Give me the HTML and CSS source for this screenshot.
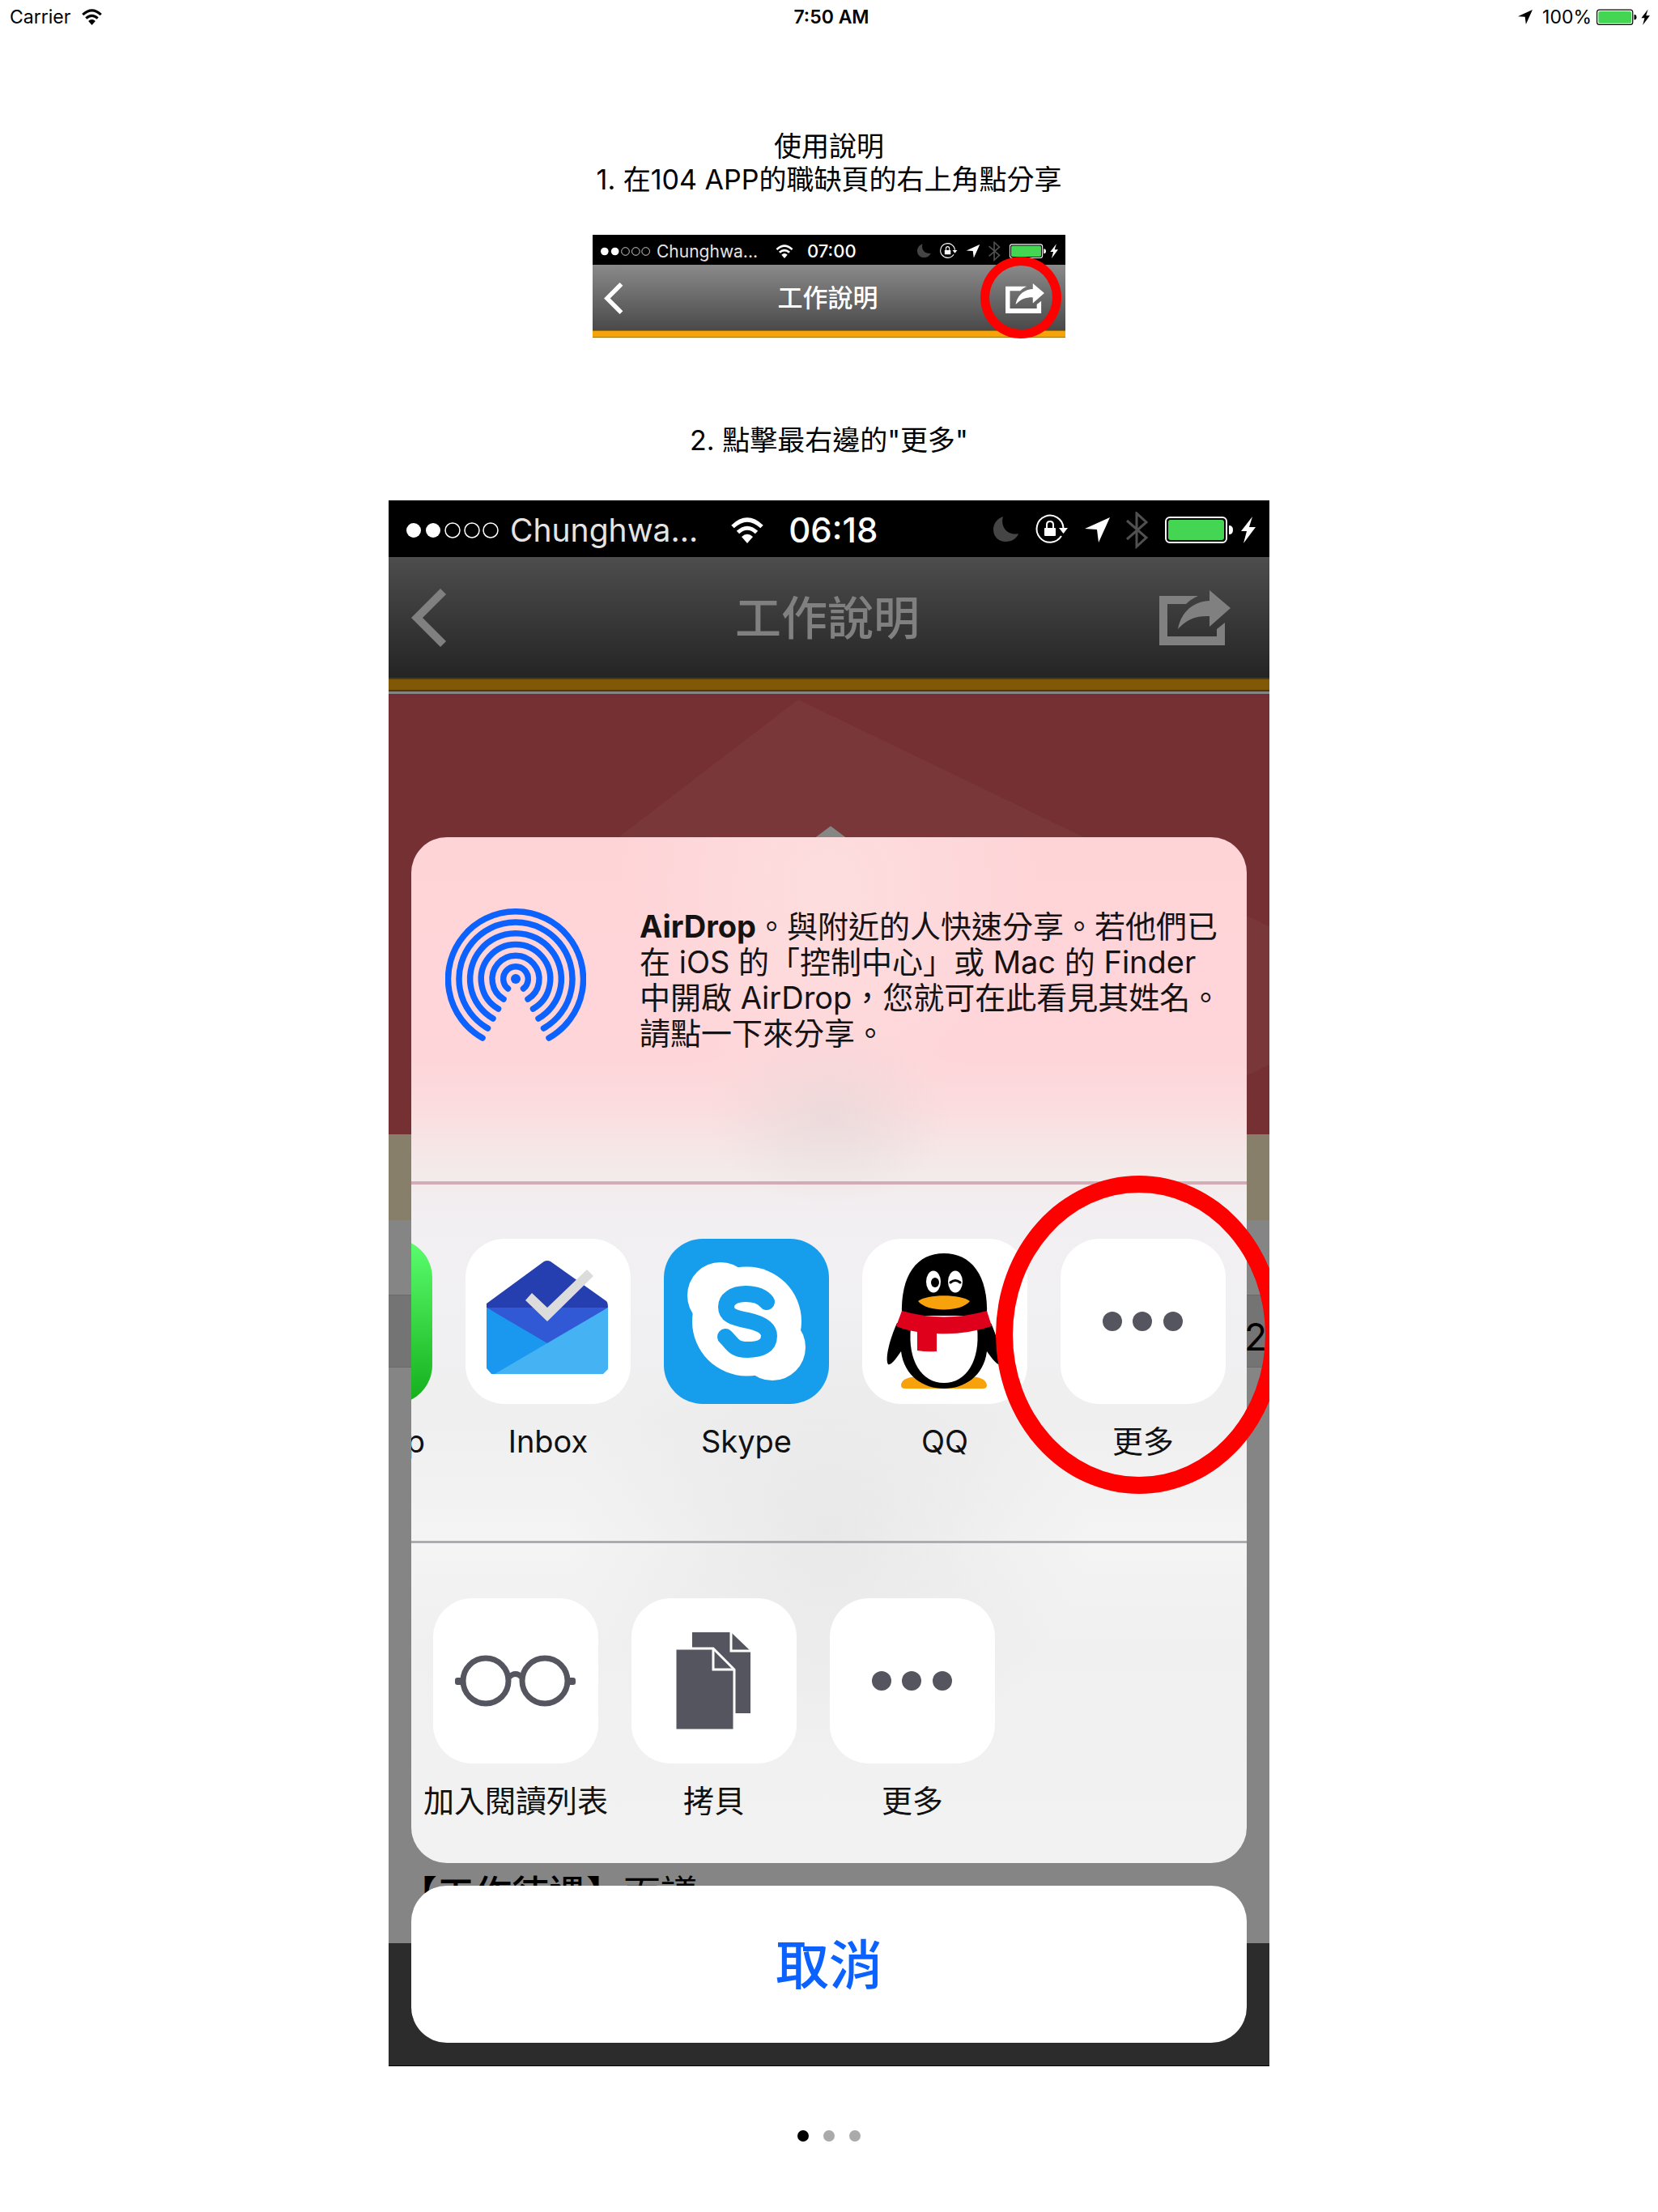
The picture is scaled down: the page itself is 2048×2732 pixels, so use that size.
FILE: index.html
```html
<!DOCTYPE html>
<html lang="zh-Hant">
<head>
<meta charset="utf-8">
<meta name="viewport" content="width=device-width, initial-scale=1">
<title>使用說明</title>
<link rel="stylesheet" href="styles.css">
</head>
<body>
<svg class="defs" aria-hidden="true">
  <symbol id="wifi" viewBox="0 0 40 32">
    <g fill="none" stroke="currentColor" stroke-width="5">
      <path d="M2 11.500Q20 -5.500 38 11.500"/>
      <path d="M8.500 18.500Q20 8 31.500 18.500"/>
    </g>
    <path d="M13 24Q20 17.500 27 24L20 32Z" fill="currentColor"/>
  </symbol>
  <symbol id="arrow" viewBox="0 0 31 31">
    <path d="M0 14L31 0L17 31L15 15Z" fill="currentColor"/>
  </symbol>
  <symbol id="battery" viewBox="0 0 112 34">
    <rect x="1" y="2" width="75" height="31" rx="5" fill="none" stroke="currentColor" stroke-width="2"/>
    <rect x="4" y="5" width="69" height="25" rx="3" fill="#44d652"/>
    <path d="M79 12Q84 12 84 17.500Q84 23 79 23Z" fill="currentColor"/>
    <path d="M108 1L94 19H101L97 34L112 14H104Z" fill="currentColor"/>
  </symbol>
  <symbol id="signal" viewBox="0 0 114 20">
    <circle cx="9" cy="10" r="9" fill="currentColor"/>
    <circle cx="33" cy="10" r="9" fill="currentColor"/>
    <g fill="none" stroke="currentColor" stroke-width="1.500">
      <circle cx="57" cy="10" r="9"/><circle cx="81" cy="10" r="9"/><circle cx="104" cy="10" r="9"/>
    </g>
  </symbol>
  <symbol id="status-set" viewBox="0 0 324 46">
    <path d="M12 6C4 9 0 15 0 22C0 31 7 37 15 37C23 37 29 33 31 27C19 30 8 20 12 6Z" fill="#454545"/>
    <path d="M84 30A16.500 16.500 0 1 1 86.500 20" fill="none" stroke="currentColor" stroke-width="2"/>
    <path d="M81 20H92L86.500 27Z" fill="currentColor"/>
    <rect x="63" y="20" width="14" height="10" rx="1" fill="currentColor"/>
    <path d="M66 21V16Q66 12 70 12Q74 12 74 16V21" fill="none" stroke="currentColor" stroke-width="2"/>
    <use href="#arrow" x="113" y="7" width="31" height="31"/>
    <path d="M165 11L189 32L177 43V2L189 13L165 34" fill="none" stroke="#505050" stroke-width="3"/>
    <use href="#battery" x="212" y="5" width="112" height="34"/>
  </symbol>
  <symbol id="back" viewBox="0 0 44 72">
    <path d="M0 36L36 0L43 7L14 36L43 65L36 72Z" fill="currentColor"/>
  </symbol>
  <symbol id="share" viewBox="0 0 88 68">
    <path d="M0 7H48Q39 11 33 17H10V57H71V48L81 40V68H0Z" fill="currentColor"/>
    <path d="M62 0L88 22L62 45V32C44 31 33 37 23 48C27 26 42 14 62 13Z" fill="currentColor"/>
  </symbol>
  <symbol id="dots" viewBox="0 0 204 204">
    <g fill="#55555f"><circle cx="64" cy="102" r="12"/><circle cx="101" cy="102" r="12"/><circle cx="139" cy="102" r="12"/></g>
  </symbol>
</svg>

<header class="device-status">
  <div class="device-left">Carrier<svg class="device-wifi"><use href="#wifi"/></svg></div>
  <div class="device-time">7:50 AM</div>
  <div class="device-right">
    <svg class="device-arrow"><use href="#arrow"/></svg>
    <span>100%</span>
    <svg class="device-battery"><use href="#battery"/></svg>
  </div>
</header>

<main class="guide">
  <h1 class="step">使用說明</h1>
  <p class="step">1. 在104 APP的職缺頁的右上角點分享</p>

  <section class="shot shot-small">
    <div class="bar">
      <svg class="signal"><use href="#signal"/></svg>
      <span class="carrier">Chunghwa...</span>
      <svg class="wifi"><use href="#wifi"/></svg>
      <strong class="clock">07:00</strong>
      <svg class="status-set"><use href="#status-set"/></svg>
    </div>
    <div class="nav">
      <button class="nav-button" aria-label="返回"><svg class="back"><use href="#back"/></svg></button>
      <h2 class="nav-title">工作說明</h2>
      <button class="nav-button" aria-label="分享"><svg class="share"><use href="#share"/></svg></button>
    </div>
    <span class="ring"></span>
  </section>

  <p class="step step-two">2. 點擊最右邊的"更多"</p>

  <section class="shot shot-large">
    <div class="bar">
      <svg class="signal"><use href="#signal"/></svg>
      <span class="carrier">Chunghwa...</span>
      <svg class="wifi"><use href="#wifi"/></svg>
      <strong class="clock">06:18</strong>
      <svg class="status-set"><use href="#status-set"/></svg>
    </div>
    <div class="nav">
      <button class="nav-button" aria-label="返回"><svg class="back"><use href="#back"/></svg></button>
      <h2 class="nav-title">工作說明</h2>
      <button class="nav-button" aria-label="分享"><svg class="share"><use href="#share"/></svg></button>
    </div>
    <div class="stage">
      <div class="backdrop">
        <div class="hero">
          <svg class="hero-art" viewBox="0 0 1088 543" preserveAspectRatio="none">
            <path d="M506 7L1088 287V457L1000 500L285 176Z" fill="#7a373a"/>
            <path d="M546 163L574 184H518Z" fill="#858784"/>
          </svg>
        </div>
        <div class="tan"></div>
        <div class="gap"></div>
        <div class="tab">2</div>
        <div class="details"><p class="detail"><b>【工作待遇】</b>面議</p></div>
        <div class="foot"></div>
      </div>
      <div class="overlay">
        <div class="sheet">
          <div class="airdrop">
            <svg class="airdrop-icon" viewBox="-87 -87 174 168">
              <circle r="6" fill="#0b62ff"/>
              <g fill="none" stroke="#0b62ff" stroke-width="7.500" stroke-linecap="round">
                <path d="M-9.500 12A15.300 15.300 0 1 1 9.500 12"/>
                <path d="M-15 25A29 29 0 1 1 15 25"/>
                <path d="M-21.500 37A42.700 42.700 0 1 1 21.500 37"/>
                <path d="M-28 49A56.400 56.400 0 1 1 28 49"/>
                <path d="M-34.500 61A70 70 0 1 1 34.500 61"/>
                <path d="M-41 73A83.500 83.500 0 1 1 41 73"/>
              </g>
            </svg>
            <p class="airdrop-text"><b>AirDrop</b>。與附近的人快速分享。若他們已<br>在 iOS 的「控制中心」或 Mac 的 Finder<br>中開啟 AirDrop，您就可在此看見其姓名。<br>請點一下來分享。</p>
          </div>
          <div class="row apps">
            <button class="item"><span class="tile tile-green"></span><span class="label">WhatsApp</span></button>
            <button class="item"><svg class="tile" viewBox="0 0 204 204">
              <path d="M26 80L97 28Q101 26 105 28L174 77Q176 79 176 85L101 132L26 85Z" fill="#263fb0"/>
              <path d="M26 85H176L101 133Z" fill="#3159d6"/>
              <path d="M26 85L101 129L120 167H32L26 160Z" fill="#1a98f0"/>
              <path d="M36 167L176 85V161L170 167Z" fill="#45b2f4"/>
              <path d="M74 76L82 67L101 85L150 38L158 46L101 102Z" fill="#dcdcdc"/>
            </svg><span class="label">Inbox</span></button>
            <button class="item"><svg class="tile tile-blue" viewBox="0 0 204 204">
              <g fill="#fff"><circle cx="102.500" cy="102" r="67.500"/><circle cx="70" cy="70" r="41"/><circle cx="134" cy="134" r="41"/></g>
              <path d="M127 78C121 70 112 68 101 68C86 68 77 75 77 84C77 94 84 97 104 101C122 105 130 111 130 120C130 132 120 137 103 137C85 137 84 128 76 121" fill="none" stroke="#169eec" stroke-width="20" stroke-linecap="round"/>
            </svg><span class="label">Skype</span></button>
            <button class="item"><svg class="tile" viewBox="0 0 204 204">
              <path d="M48 181C49 171 62 168 101 170C140 168 153 171 154 181Q154 185 149 185H53Q48 185 48 181Z" fill="#f7a20d"/>
              <path d="M43 104C34 124 28 148 32 155C36 157 44 145 48 139C52 170 76 185 101 185C126 185 150 170 154 139C158 145 167 157 170 155C174 148 168 124 159 104Z"/>
              <path d="M49 95C47 44 68 18 101 18C134 18 156 44 154 95Z"/>
              <path d="M60 110H142C146 150 129 178 101 178C73 178 56 150 60 110Z" fill="#fff"/>
              <path d="M49 89Q101 104 154 89L160 108Q126 119 92 117V139Q80 140 68 138V115Q54 113 42 108Z" fill="#df001b"/>
              <g fill="#fff"><ellipse cx="88" cy="53" rx="9" ry="13.500"/><ellipse cx="115" cy="53" rx="9" ry="13.500"/></g>
              <ellipse cx="90" cy="54" rx="5" ry="6"/>
              <path d="M109 54Q115 49 121 54" fill="none" stroke="#000" stroke-width="3" stroke-linecap="round"/>
              <path d="M69 77C80 68 122 68 133 77C122 91 80 91 69 77Z" fill="#f7a20d"/>
            </svg><span class="label">QQ</span></button>
            <button class="item"><svg class="tile"><use href="#dots"/></svg><span class="label">更多</span></button>
          </div>
          <div class="row actions">
            <button class="item"><svg class="tile" viewBox="0 0 204 204">
              <g fill="none" stroke="#55555f" stroke-width="7"><circle cx="65" cy="102" r="28"/><circle cx="138" cy="102" r="28"/><path d="M93 98Q102 89 110 98"/></g>
              <g fill="#55555f"><rect x="27" y="98" width="11" height="9" rx="3"/><rect x="165" y="98" width="11" height="9" rx="3"/></g>
            </svg><span class="label">加入閱讀列表</span></button>
            <button class="item"><svg class="tile" viewBox="0 0 204 204">
              <path d="M75 42H123L147 65V142H75Z" fill="#55555f"/>
              <path d="M123 40V65H148" fill="none" stroke="#fff" stroke-width="3"/>
              <path d="M54 62H101L127 88V163H54Z" fill="#55555f" stroke="#fff" stroke-width="3"/>
              <path d="M101 62V88H127" fill="none" stroke="#fff" stroke-width="3"/>
            </svg><span class="label">拷貝</span></button>
            <button class="item"><svg class="tile"><use href="#dots"/></svg><span class="label">更多</span></button>
          </div>
        </div>
        <button class="cancel">取消</button>
        <span class="ring ring-more"></span>
      </div>
    </div>
  </section>

  <nav class="pager" aria-label="頁面">
    <button class="page-dot current" aria-label="第 1 頁"></button>
    <button class="page-dot" aria-label="第 2 頁"></button>
    <button class="page-dot" aria-label="第 3 頁"></button>
  </nav>
</main>
</body>
</html>
```

FILE: styles.css
```css
* {
  box-sizing: border-box;
}

body {
  margin: 0;
  min-height: 100vh;
  background: #fff;
  color: #000;
  font-family: Inter, "Noto Sans CJK TC", sans-serif;
}

h1, h2, p {
  margin: 0;
  font-weight: 400;
}

button {
  margin: 0;
  padding: 0;
  border: 0;
  background: none;
  color: inherit;
  font: inherit;
}

svg {
  display: block;
  flex: none;
}

.defs {
  position: absolute;
  width: 0;
  height: 0;
}

/* Device status bar */
.device-status {
  display: grid;
  grid-template-columns: 1fr auto 1fr;
  align-items: center;
  height: 42px;
  padding: 0 10px 0 12px;
  font-size: 23px;
}

.device-left, .device-right {
  display: flex;
  align-items: center;
}

.device-left {
  gap: 14px;
}

.device-right {
  justify-content: flex-end;
  gap: 6px;
}

.device-time {
  padding-left: 4px;
  font-weight: 600;
}

.device-wifi {
  width: 25px;
  height: 20px;
}

.device-arrow {
  width: 18px;
  height: 18px;
  margin-right: 6px;
}

.device-battery {
  width: 66px;
  height: 20px;
}

/* Guide column */
.guide {
  display: flex;
  flex-direction: column;
  align-items: center;
  padding-top: 118px;
}

.step {
  font-size: 34px;
  line-height: 41px;
  text-align: center;
}

.step-two {
  margin: 105px 0 54px;
}

/* Phone shots */
.shot {
  position: relative;
  max-width: 100%;
  overflow: hidden;
}

.bar {
  display: flex;
  align-items: center;
  background: #000;
  color: #fff;
  white-space: nowrap;
}

.carrier {
  color: #e4e4e4;
}

.clock {
  font-weight: 500;
}

.status-set {
  margin-left: auto;
}

.nav {
  display: flex;
  align-items: center;
  justify-content: space-between;
}

.nav-title {
  font-weight: 500;
}

.ring {
  position: absolute;
  border: solid #f00;
  border-radius: 50%;
  pointer-events: none;
}

.shot-small {
  width: 584px;
  margin-top: 48px;
}

.shot-small .bar {
  height: 37px;
  padding: 3px 9px 0 10px;
  font-size: 21px;
}

.shot-small .signal {
  width: 61px;
  height: 11px;
  margin-right: 8px;
}

.shot-small .wifi {
  width: 22px;
  height: 17px;
  margin: 0 17px 0 22px;
}

.shot-small .clock {
  font-size: 22px;
}

.shot-small .status-set {
  width: 174px;
  height: 25px;
}

.shot-small .nav {
  height: 91px;
  padding: 0 26px 0 14px;
  border-bottom: 1px solid #fff;
  background:
    linear-gradient(#a87204 0 1px, #f5a40a 1px 8px, #a87204 8px 9px) bottom / 100% 9px no-repeat,
    linear-gradient(#8a8a8a, #424242);
  color: #fff;
}

.shot-small .nav-title {
  padding: 0 0 14px 33px;
  font-size: 31px;
}

.shot-small .nav-button {
  padding-bottom: 8px;
}

.shot-small .back {
  width: 24px;
  height: 39px;
}

.shot-small .share {
  width: 48px;
  height: 37px;
}

.shot-small .ring {
  right: 5px;
  bottom: 0;
  width: 100px;
  height: 101px;
  border-width: 11px;
}

.shot-large {
  width: 1088px;
}

.shot-large .bar {
  height: 70px;
  padding: 3px 17px 0 22px;
  font-size: 39px;
}

.shot-large .signal {
  width: 114px;
  height: 20px;
  margin-right: 14px;
}

.shot-large .wifi {
  width: 40px;
  height: 32px;
  margin: 0 31px 0 41px;
}

.shot-large .clock {
  font-size: 42px;
}

.shot-large .status-set {
  width: 324px;
  height: 46px;
}

.shot-large .nav {
  height: 169px;
  padding: 0 48px 19px 28px;
  background:
    linear-gradient(#523903 0 2px, #815805 2px 15px, #523903 15px 17px, #858585 17px 20px) bottom / 100% 20px no-repeat,
    linear-gradient(#4d4d4d, #242424 150px);
  color: #808080;
}

.shot-large .nav-title {
  padding: 0 0 8px 60px;
  font-size: 57px;
}

.shot-large .back {
  width: 44px;
  height: 72px;
}

.shot-large .share {
  width: 88px;
  height: 68px;
}

/* Page under the share sheet */
.stage {
  display: grid;
}

.backdrop, .overlay {
  grid-area: 1 / 1;
  min-width: 0;
}

.backdrop {
  display: flex;
  flex-direction: column;
  background: #858585;
}

.hero {
  height: 544px;
  background: #743033;
}

.hero-art {
  width: 100%;
  height: 100%;
}

.tan {
  height: 106px;
  background: #877f6a;
}

.gap {
  height: 92px;
}

.tab {
  height: 90px;
  padding-right: 3px;
  border: solid #6a6a6a;
  border-width: 1px 0;
  background: #747474;
  font-size: 46px;
  line-height: 102px;
  text-align: right;
}

.details {
  display: flex;
  flex: 1;
  align-items: flex-end;
  padding: 0 14px 35px;
}

.detail {
  font-size: 46px;
  line-height: 54px;
}

.detail b {
  font-weight: 500;
}

.foot {
  height: 152px;
  border-bottom: 1px solid #000;
  background: #2c2c2c;
}

/* Share sheet */
.overlay {
  position: relative;
  display: flex;
  flex-direction: column;
  gap: 28px;
  padding: 177px 28px 29px;
}

.sheet {
  overflow: hidden;
  border-radius: 44px;
  background:
    radial-gradient(ellipse 150px 110px at 50% 345px, rgba(222, 214, 214, 0.5), transparent),
    radial-gradient(ellipse 260px 300px at 50% 60px, rgba(253, 228, 228, 0.6), transparent),
    radial-gradient(ellipse 320px 280px at 50% 860px, rgba(228, 228, 228, 0.7), transparent),
    linear-gradient(#fed4d7, #fed5d9 270px, #fcdcde 330px, #f6e6e6 385px, #f3ebeb 420px, #f2eff2 470px, #f0f0f3 600px, #efefef 720px, #f4f4f4 870px, #f0f0f0 1000px, #f2f2f2);
}

.airdrop {
  display: flex;
  align-items: flex-start;
  gap: 66px;
  height: 429px;
  padding: 88px 0 0 42px;
  border-bottom: 4px solid rgba(190, 130, 145, 0.6);
}

.airdrop-icon {
  width: 174px;
  height: 168px;
}

.airdrop-text {
  color: #151214;
  font-size: 38px;
  line-height: 44px;
  white-space: nowrap;
}

.row {
  display: flex;
  gap: 41px;
  overflow: hidden;
}

.apps {
  justify-content: flex-end;
  height: 443px;
  padding: 67px 26px 0 0;
  border-bottom: 3px solid #acacb0;
}

.actions {
  height: 395px;
  padding: 68px 27px 0;
}

.item {
  display: flex;
  flex: none;
  flex-direction: column;
  align-items: center;
  gap: 23px;
  width: 204px;
}

.tile {
  width: 204px;
  height: 204px;
  border-radius: 48px;
  background: #fff;
}

.tile-green {
  background: linear-gradient(#5cff70, #14ae1a);
}

.tile-blue {
  background: #169eec;
}

.label {
  color: #111;
  font-size: 38px;
  line-height: 46px;
  white-space: nowrap;
}

.cancel {
  height: 194px;
  padding-bottom: 8px;
  border-radius: 44px;
  background: #fff;
  color: #0b62ff;
  font-size: 66px;
  font-weight: 500;
}

.ring-more {
  top: 595px;
  right: -16px;
  width: 354px;
  height: 393px;
  border-width: 21px;
}

/* Page indicator */
.pager {
  display: flex;
  gap: 18px;
  padding: 79px 0;
}

.page-dot {
  width: 14px;
  height: 14px;
  border-radius: 50%;
  background: #aaa;
}

.current {
  background: #000;
}
```
